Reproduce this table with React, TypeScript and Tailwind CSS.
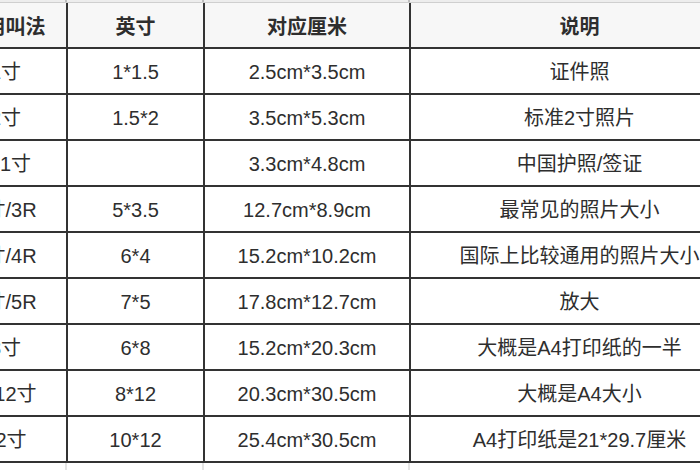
const rows: [string, string, string, string][] = [
  ['1寸', '1*1.5', '2.5cm*3.5cm', '证件照'],
  ['2寸', '1.5*2', '3.5cm*5.3cm', '标准2寸照片'],
  ['小1寸', '', '3.3cm*4.8cm', '中国护照/签证'],
  ['5寸/3R', '5*3.5', '12.7cm*8.9cm', '最常见的照片大小'],
  ['6寸/4R', '6*4', '15.2cm*10.2cm', '国际上比较通用的照片大小'],
  ['7寸/5R', '7*5', '17.8cm*12.7cm', '放大'],
  ['8寸', '6*8', '15.2cm*20.3cm', '大概是A4打印纸的一半'],
  ['小12寸', '8*12', '20.3cm*30.5cm', '大概是A4大小'],
  ['12寸', '10*12', '25.4cm*30.5cm', 'A4打印纸是21*29.7厘米'],
];

const headers = ['通用叫法', '英寸', '对应厘米', '说明'];

export default function App() {
  return (
    <div className="h-[470px] w-[700px] overflow-hidden bg-white font-['Liberation_Sans','Noto_Sans_CJK_SC',sans-serif] text-[20px] text-[#2e2e2e]">
      <div className="ml-[-55px] w-[803px]">
        {/* faint strip above the header: the previous row cut off */}
        <div className="grid h-[3px] grid-cols-[122px_137px_206px_338px] border-b border-[#cfcfcf] bg-[#ededed]">
          <div className="border-r-2 border-[#bdbdbd]" />
          <div className="border-r-2 border-[#bdbdbd]" />
          <div className="border-r-2 border-[#bdbdbd]" />
          <div />
        </div>

        <table className="w-[803px] table-fixed border-collapse">
          <colgroup>
            <col className="w-[122px]" />
            <col className="w-[137px]" />
            <col className="w-[206px]" />
            <col className="w-[338px]" />
          </colgroup>
          <thead>
            <tr className="h-[45px] bg-[#f7f7f7]">
              {headers.map((h, i) => (
                <th
                  key={h}
                  className={`border-b-2 border-[#333] p-0 pt-[4px] text-center font-bold leading-none ${
                    i < 3 ? 'border-r-2' : ''
                  }`}
                >
                  {h}
                </th>
              ))}
            </tr>
          </thead>
          <tbody>
            {rows.map((r) => (
              <tr key={r[0]} className="h-[46px]">
                {r.map((c, i) => (
                  <td
                    key={i}
                    className={`border-b-2 border-[#333] p-0 pt-[2px] text-center leading-none whitespace-nowrap ${
                      i < 3 ? 'border-r-2' : ''
                    }`}
                  >
                    {c}
                  </td>
                ))}
              </tr>
            ))}
          </tbody>
        </table>

        {/* next row, cut off at the bottom */}
        <div className="grid h-[12px] grid-cols-[122px_137px_206px_338px]">
          <div className="border-r-2 border-[#e4e4e4]" />
          <div className="border-r-2 border-[#e4e4e4]" />
          <div className="border-r-2 border-[#e4e4e4]" />
          <div />
        </div>
      </div>
    </div>
  );
}
